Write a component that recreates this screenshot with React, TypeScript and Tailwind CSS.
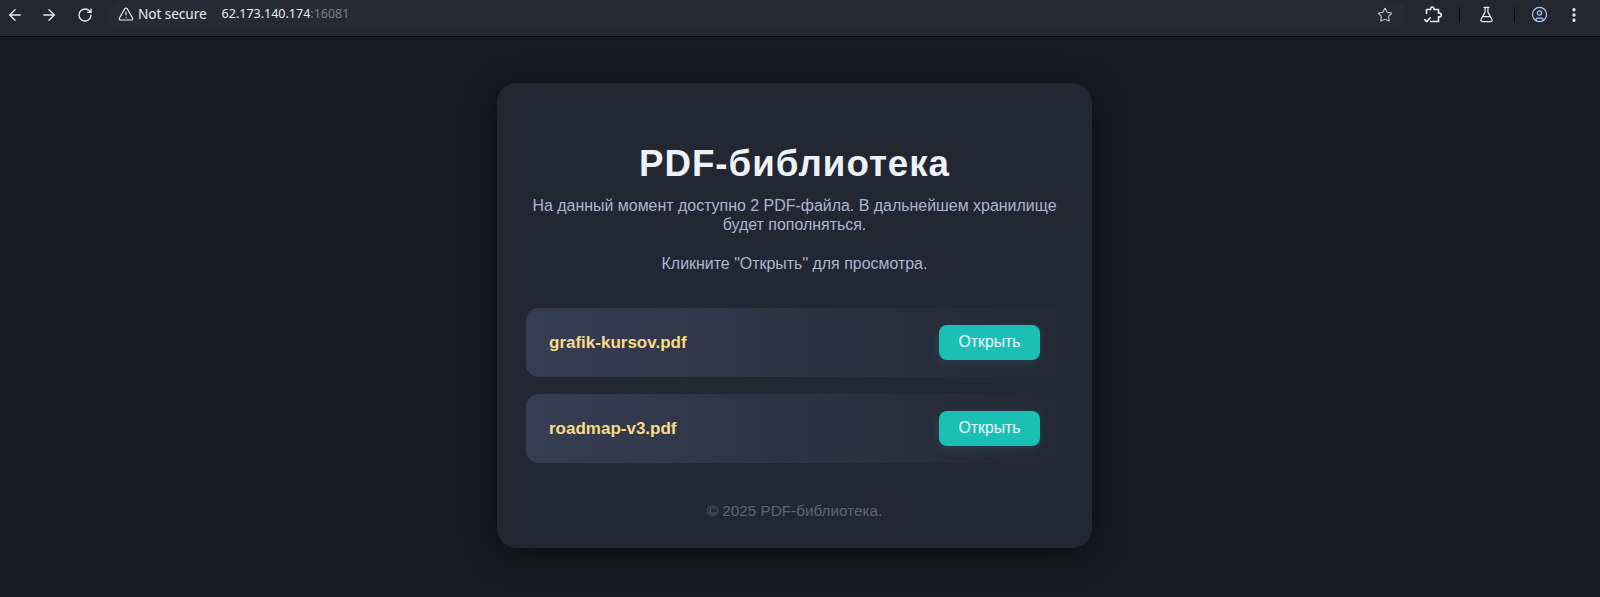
import React from 'react';
import { ArrowLeft, ArrowRight, RotateCw, TriangleAlert, Star, FlaskConical, CircleUser, EllipsisVertical } from 'lucide-react';

const files = ['grafik-kursov.pdf', 'roadmap-v3.pdf'];

const ExtensionIcon = () => (
  <svg width="20" height="20" viewBox="0 0 20 20" fill="none" stroke="#e8eaed" strokeWidth="1.6" strokeLinecap="round" strokeLinejoin="round">
    <path d="M3.5 8.5V4.5h4.2V3.6a1.6 1.6 0 0 1 3.2 0v.9h4.6v3.6h.9a1.9 1.9 0 0 1 0 3.8h-.9v4.6H7.5" />
    <path d="M1.8 14.6l2 2 3.4-3.8" />
  </svg>
);

const Toolbar = () => (
  <div className="flex h-[37px] shrink-0 items-center border-b border-[#0b0d12] bg-[#24272f] pb-[7px] pl-[6px] pr-[17px] font-['Noto_Sans',sans-serif] text-[#e8eaed]">
    <div className="flex items-center gap-[16px]">
      <ArrowLeft size={18} strokeWidth={1.8} />
      <ArrowRight size={18} strokeWidth={1.8} />
      <RotateCw size={16} strokeWidth={2} className="ml-[3px]" />
    </div>
    <div className="ml-[16px] flex h-[28px] flex-1 items-center justify-between rounded-full bg-[#272a35] pl-[9px] pr-[14px]">
      <div className="flex items-center">
        <div className="flex items-center gap-[4px] text-[13.7px]">
          <TriangleAlert size={16} strokeWidth={1.8} />
          <span className="tracking-[-0.1px]">Not secure</span>
        </div>
        <div className="ml-[15px] text-[12.5px]">
          62.173.140.174<span className="text-[#7d8088]">:16081</span>
        </div>
      </div>
      <Star size={16} strokeWidth={1.6} className="text-[#c4c7cc]" />
    </div>
    <div className="flex items-center">
      <div className="ml-[16px]"><ExtensionIcon /></div>
      <div className="ml-[16px] h-[15px] w-px bg-[#0b0d12]" />
      <FlaskConical size={17} strokeWidth={1.7} className="ml-[18px]" />
      <div className="ml-[19px] h-[15px] w-px bg-[#0b0d12]" />
      <CircleUser size={17} strokeWidth={1.7} className="ml-[16px] text-[#a8c7fa]" />
      <EllipsisVertical size={18} strokeWidth={2.4} className="ml-[17px]" />
    </div>
  </div>
);

const FileRow = ({ name }: { name: string }) => (
  <div className="flex h-[69px] items-center justify-between rounded-[13px] bg-gradient-to-r from-[#363e52] to-[#242834] pl-[23px] pr-[23px]">
    <span className="text-[17px] font-bold text-[#f5dc85]">{name}</span>
    <button className="flex h-[35px] w-[101px] items-center justify-center rounded-[8px] bg-[#1bbfb4] text-[15.8px] text-[#ecfffb] shadow-[0_2px_10px_rgba(27,191,180,0.18)]">
      Открыть
    </button>
  </div>
);

export default function App() {
  return (
    <div className="flex h-[597px] flex-col overflow-hidden bg-[#171a21] font-['Liberation_Sans',sans-serif]">
      <Toolbar />
      <div className="flex flex-1 justify-center pr-[11px] pt-[46px]">
        <div className="h-[465px] w-[595px] rounded-[20px] bg-[#232733] px-[29px] pt-[58px] shadow-[0_6px_32px_rgba(0,0,0,0.45)]">
          <h1 className="text-center text-[36.7px] leading-[46px] font-bold tracking-[1px] text-[#eef1f6]">PDF-библиотека</h1>
          <p className="mt-[9px] text-center text-[15.95px] leading-[19.2px] text-[#aeb5d0]">
            На данный момент доступно 2 PDF-файла. В дальнейшем хранилище будет пополняться.
            <br />
            <br />
            Кликните "Открыть" для просмотра.
          </p>
          <div className="mt-[35px] flex flex-col gap-[17px]">
            {files.map((f) => (
              <FileRow key={f} name={f} />
            ))}
          </div>
          <p className="mt-[38px] text-center text-[15.3px] leading-[19.5px] text-[#5f6575]">© 2025 PDF-библиотека.</p>
        </div>
      </div>
    </div>
  );
}
